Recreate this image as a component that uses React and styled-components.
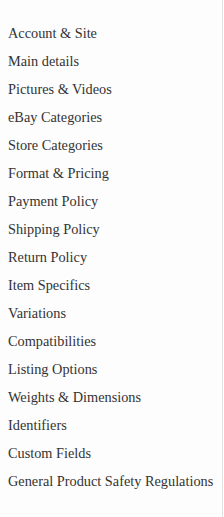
import React from "react";
import styled, { createGlobalStyle } from "styled-components";

const Global = createGlobalStyle`
  html, body { margin: 0; padding: 0; background: #ffffff; }
  body { font-family: "Liberation Serif", "Times New Roman", serif; }
`;

const Sidebar = styled.nav`
  box-sizing: border-box;
  width: 223px;
  min-height: 517px;
  background: #fdfdfd;
  border-right: 1px solid #e2e2e2;
  padding: 19px 0 0 8px;
`;

const List = styled.ul`
  list-style: none;
  margin: 0;
  padding: 0;
`;

const Item = styled.li`
  font-size: 14.3px;
  line-height: 28px;
  color: #333333;
  white-space: nowrap;
  cursor: pointer;
`;

const items = [
  "Account & Site",
  "Main details",
  "Pictures & Videos",
  "eBay Categories",
  "Store Categories",
  "Format & Pricing",
  "Payment Policy",
  "Shipping Policy",
  "Return Policy",
  "Item Specifics",
  "Variations",
  "Compatibilities",
  "Listing Options",
  "Weights & Dimensions",
  "Identifiers",
  "Custom Fields",
  "General Product Safety Regulations",
];

export default function App() {
  return (
    <>
      <Global />
      <Sidebar>
        <List>
          {items.map((t) => (
            <Item key={t}>{t}</Item>
          ))}
        </List>
      </Sidebar>
    </>
  );
}
